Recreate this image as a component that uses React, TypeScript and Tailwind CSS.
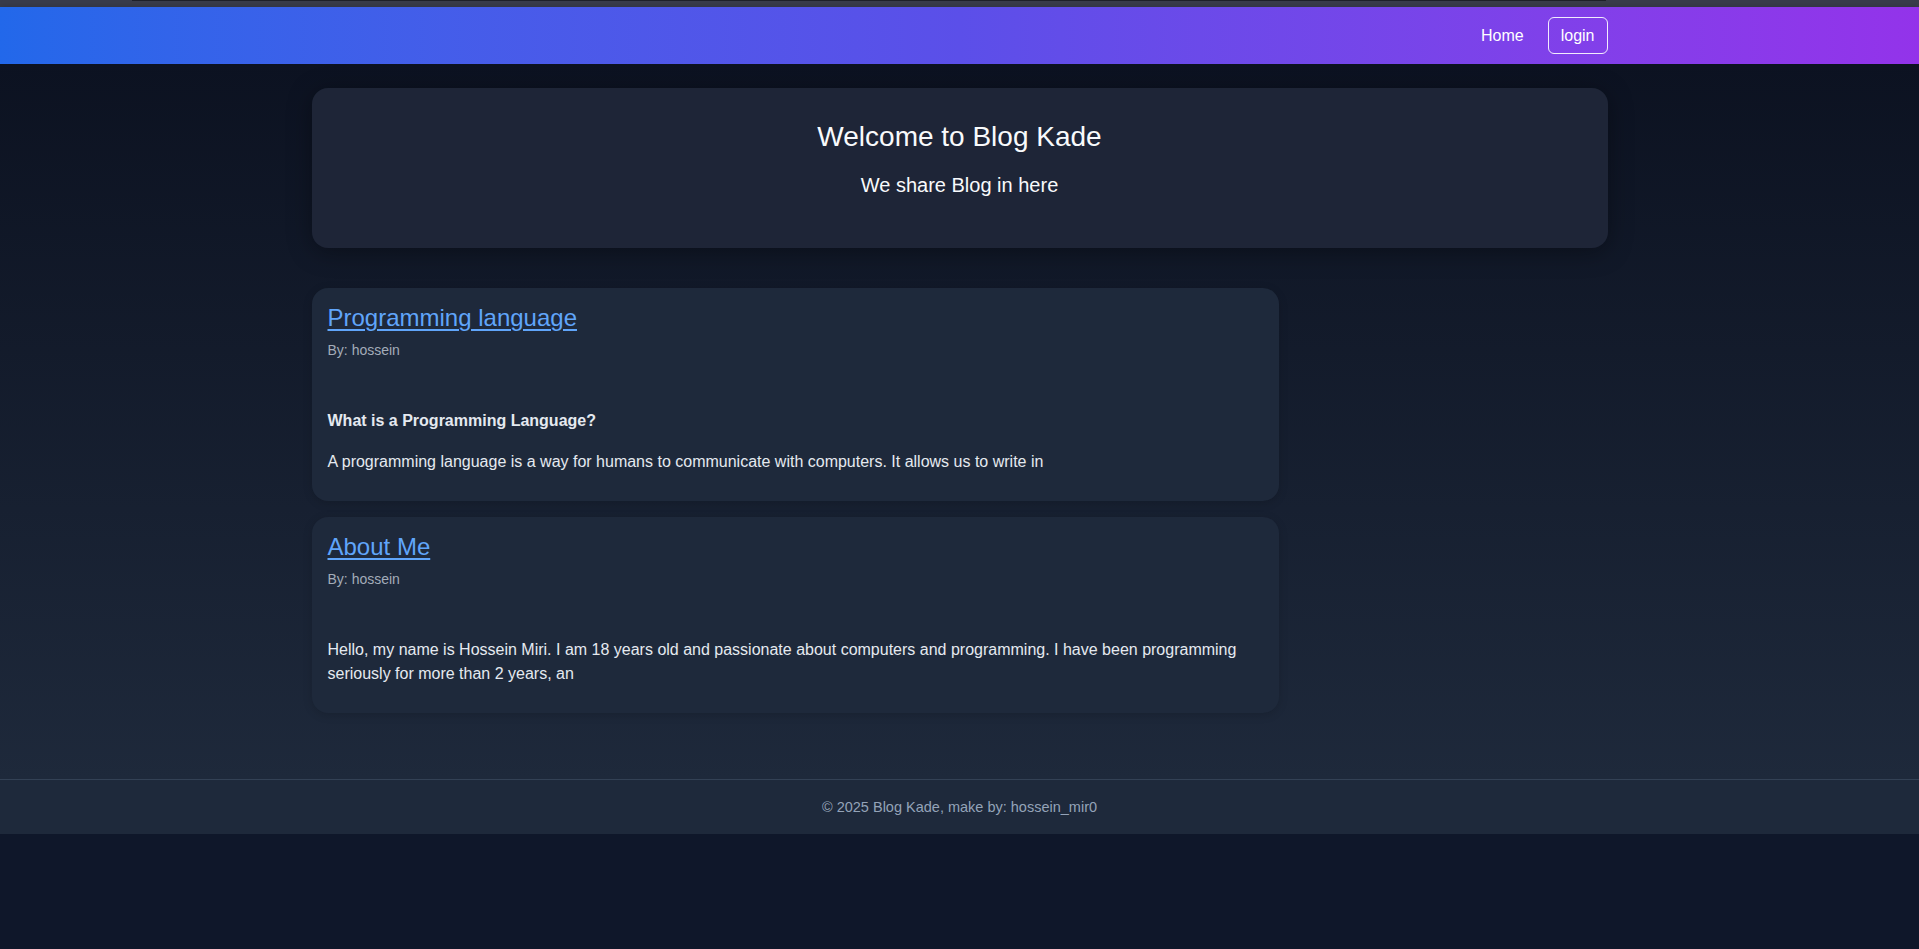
import React from "react";

// Blog home: gradient navbar, hero card, post list, footer
const POSTS = [
  {
    title: "Programming language",
    author: "hossein",
    heading: "What is a Programming Language?",
    excerpt:
      "A programming language is a way for humans to communicate with computers. It allows us to write in",
  },
  {
    title: "About Me",
    author: "hossein",
    heading: null,
    excerpt:
      "Hello, my name is Hossein Miri. I am 18 years old and passionate about computers and programming. I have been programming seriously for more than 2 years, an",
  },
];

function PostCard({ post }: { post: (typeof POSTS)[number] }) {
  return (
    <article className="rounded-2xl bg-[#1e293b] px-4 pt-4 pb-[27px] shadow-[0_2px_10px_rgba(0,0,0,0.15)]">
      <h2 className="text-[24px] leading-[28px] font-normal">
        <a href="#" className="text-[#60a5fa] underline underline-offset-[3px] decoration-[1.5px]">
          {post.title}
        </a>
      </h2>
      <p className="mt-[10px] text-[14px] leading-[16px] text-[#a3acb9]">By: {post.author}</p>
      <div className="mt-[51px] text-[16px] leading-[24px] text-[#e5e9f0]">
        {post.heading && <p className="font-bold mb-[17px]">{post.heading}</p>}
        <p>{post.excerpt}</p>
      </div>
    </article>
  );
}

export default function App() {
  return (
    <div className="min-h-screen bg-[#0f172a] font-['Liberation_Sans',Arial,sans-serif]">
      {/* window strip */}
      <div className="h-[7px] bg-[#393c4b]">
        <div className="ml-[132px] w-[1474px] h-px bg-[#1f212a]" />
      </div>

      {/* Navbar */}
      <nav className="h-[57px] bg-linear-to-r from-[#2268ea] via-[#5b4fe9] to-[#9333ea] shadow-[0_2px_8px_rgba(0,0,0,0.3)]">
        <div className="w-[1296px] mx-auto h-full flex items-center justify-end gap-6">
          <a href="#" className="text-[16px] text-white">
            Home
          </a>
          <a
            href="#"
            className="text-[16px] leading-[18px] text-white border border-white/90 rounded-md px-3 py-[8.5px]"
          >
            login
          </a>
        </div>
      </nav>

      <main className="bg-linear-to-b from-[#0c1221] to-[#1e293b] pt-6 pb-[66px]">
        <div className="w-[1296px] mx-auto">
          {/* Hero */}
          <section className="rounded-2xl bg-[#1e2537] pt-[33px] pb-[51px] text-center shadow-[0_4px_24px_rgba(0,0,0,0.35)]">
            <h1 className="text-[28px] leading-[32px] font-normal text-[#f8fafc]">Welcome to Blog Kade</h1>
            <p className="mt-[21px] text-[20px] leading-[23px] text-[#f8fafc]">We share Blog in here</p>
          </section>

          {/* Posts */}
          <div className="mt-10 w-[967px] flex flex-col gap-4">
            {POSTS.map((p) => (
              <PostCard key={p.title} post={p} />
            ))}
          </div>
        </div>
      </main>

      <footer className="border-t border-[#334155] bg-[#1e293b] py-[18px] text-center text-[14.5px] leading-[18px] text-[#94a3b8]">
        © 2025 Blog Kade, make by: hossein_mir0
      </footer>
    </div>
  );
}
